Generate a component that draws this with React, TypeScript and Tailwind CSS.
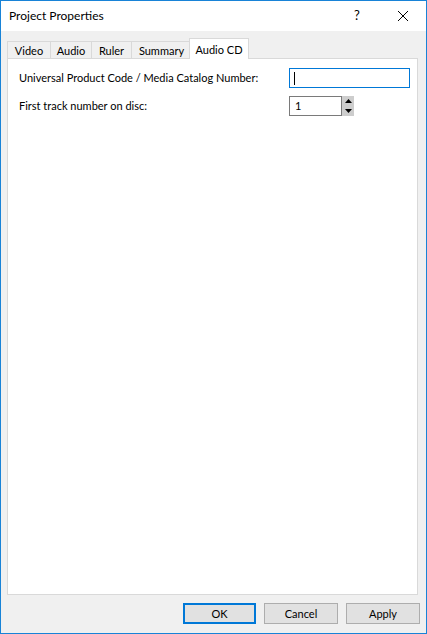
const tabs = [
  { label: 'Video', w: 'w-[44px]' },
  { label: 'Audio', w: 'w-[42px]' },
  { label: 'Ruler', w: 'w-[41px]' },
  { label: 'Summary', w: 'w-[61px]' },
];

export default function App() {
  return (
    <div className="w-[427px] h-[634px] flex flex-col border border-[#1883d7] bg-[#f0f0f0] text-[11px] text-black font-['Lato',sans-serif] overflow-hidden">
      {/* title bar */}
      <div className="h-[30px] bg-white flex items-center shrink-0">
        <div className="pl-2 flex-1 text-[12px]">Project Properties</div>
        <div className="w-[46px] h-full flex items-center justify-center text-[13px]">?</div>
        <div className="w-[46px] h-full flex items-center justify-center">
          <svg width="10" height="10" viewBox="0 0 10 10" stroke="#000" strokeWidth="1">
            <path d="M0 0L10 10M10 0L0 10" />
          </svg>
        </div>
      </div>

      {/* body */}
      <div className="flex-1 flex flex-col pt-[7px]">
        <div className="flex items-end pl-[6px] h-[20px] relative z-10">
          {tabs.map((t) => (
            <div
              key={t.label}
              className={`${t.w} h-[17px] flex items-center justify-center border border-b-0 border-[#d9d9d9] -mr-px bg-[#f0f0f0] leading-none whitespace-nowrap`}
            >
              {t.label}
            </div>
          ))}
          <div className="w-[60px] h-[21px] -ml-[2px] flex items-center justify-center border border-b-0 border-[#d9d9d9] bg-white leading-none -mb-px whitespace-nowrap">
            Audio CD
          </div>
        </div>

        <div className="ml-[6px] w-[411px] flex-1 bg-white border border-[#d9d9d9]">
          <div className="flex flex-col gap-[8px] pt-[9px] pl-[11px]">
            <div className="flex items-center h-[20px]">
              <div className="w-[270px] whitespace-nowrap">Universal Product Code / Media Catalog Number:</div>
              <div className="w-[121px] h-[20px] border border-[#0078d7] flex items-center px-[4px]">
                <div className="w-px h-[13px] bg-black" />
              </div>
            </div>
            <div className="flex items-center h-[20px]">
              <div className="w-[270px] whitespace-nowrap">First track number on disc:</div>
              <div className="flex h-[20px]">
                <div className="w-[53px] border border-[#7a7a7a] flex items-center px-[5px]">1</div>
                <div className="w-[12px] bg-[#cdcdcd] flex flex-col items-center justify-between py-[3px]">
                  <svg width="7" height="4" viewBox="0 0 7 4" fill="#000">
                    <path d="M3.5 0L7 4H0Z" />
                  </svg>
                  <svg width="7" height="4" viewBox="0 0 7 4" fill="#000">
                    <path d="M0 0H7L3.5 4Z" />
                  </svg>
                </div>
              </div>
            </div>
          </div>
        </div>

        <div className="flex justify-end gap-[8px] pr-[6px] pt-[8px] pb-[9px]">
          <button className="w-[73px] h-[21px] bg-[#e1e1e1] border-2 border-[#0078d7] leading-none">OK</button>
          <button className="w-[74px] h-[21px] bg-[#e1e1e1] border border-[#adadad] leading-none">Cancel</button>
          <button className="w-[74px] h-[21px] bg-[#e1e1e1] border border-[#adadad] leading-none">Apply</button>
        </div>
      </div>
    </div>
  );
}
